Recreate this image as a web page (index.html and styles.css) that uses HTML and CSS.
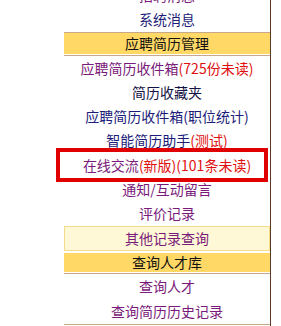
FILE: index.html
```html
<!DOCTYPE html>
<html lang="zh">
<head>
<meta charset="utf-8">
<link rel="stylesheet" href="styles.css">
</head>
<body>
<div class="page">
  <div class="menu">
    <div class="item visited">招聘消息</div>
    <div class="item link">系统消息</div>
    <div class="head">应聘简历管理</div>
    <div class="item visited">应聘简历收件箱<span class="red">(725份未读)</span></div>
    <div class="item dark">简历收藏夹</div>
    <div class="item link">应聘简历收件箱(职位统计)</div>
    <div class="item link">智能简历助手<span class="red">(测试)</span></div>
    <div class="item visited">在线交流<span class="red">(新版)(101条未读)</span></div>
    <div class="item visited">通知/互动留言</div>
    <div class="item visited">评价记录</div>
    <div class="sub">其他记录查询</div>
    <div class="head head2">查询人才库</div>
    <div class="item tall visited">查询人才</div>
    <div class="item tall visited last">查询简历历史记录</div>
  </div>
  <div class="mark"></div>
</div>
</body>
</html>
```
FILE: styles.css
```css
html, body {
  margin: 0;
  padding: 0;
  background: #fff;
}
.page {
  position: relative;
  width: 281px;
  height: 326px;
  overflow: hidden;
}
.menu {
  margin-top: -17px;
  margin-left: 64px;
  width: 206px;
  border-right: 1px solid #5a3a22;
  min-height: 360px;
  font-family: "Noto Sans CJK SC", sans-serif;
  font-size: 14px;
  text-align: center;
}
.item {
  height: 24.3px;
  line-height: 24px;
  white-space: nowrap;
}
.item.tall {
  height: 25px;
  line-height: 25px;
}
.link { color: #1c1c7a; }
.visited { color: #7a1a7a; }
.dark { color: #111144; }
.red { color: #e01010; }
.head {
  height: 21px;
  line-height: 21px;
  background: #ffd866;
  border-top: 1px solid #c8a88a;
  border-bottom: 1px solid #c8a88a;
  box-shadow: inset 0 -1px 0 #fff;
  padding-bottom: 1px;
  color: #111;
}
.head2 {
  height: 19px;
  line-height: 19px;
  border-top: 0;
}
.sub {
  margin: 0 0 2px;
  height: 23px;
  line-height: 23px;
  background: #fff8d6;
  border: 1px solid #f5dc8a;
  color: #7a1a7a;
}
.last {
  border-bottom: 1px solid #c8a88a;
}
.mark {
  position: absolute;
  left: 56px;
  top: 148px;
  width: 204px;
  height: 26px;
  border: 4px solid #e00000;
}
```
